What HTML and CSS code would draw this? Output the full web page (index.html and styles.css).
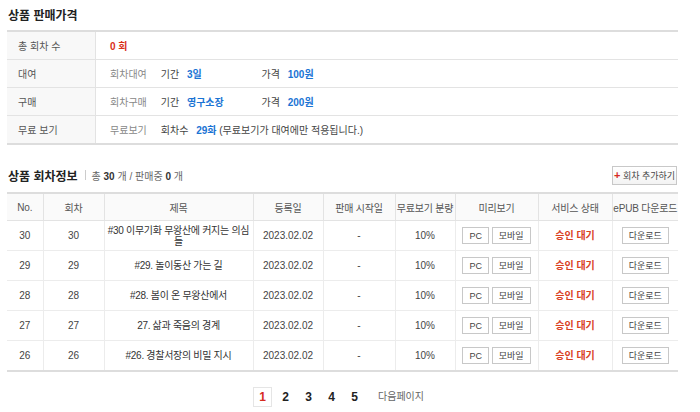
FILE: index.html
```html
<!DOCTYPE html>
<html lang="ko">
  <head>
    <meta charset="UTF-8" />
    <title>상품 판매가격</title>
    <link rel="stylesheet" href="styles.css">
  </head>
  <body>
    <div class="container">
      <h2 class="section-title">상품 판매가격</h2>

      <table class="price-table">
        <tr>
          <th>총 회차 수</th>
          <td><span class="red">0 회</span></td>
        </tr>
        <tr>
          <th>대여</th>
          <td>
            <span class="kind">회차대여</span>
            <span class="period">기간 <b class="blue">3일</b></span>
            <span>가격 <b class="blue">100원</b></span>
          </td>
        </tr>
        <tr>
          <th>구매</th>
          <td>
            <span class="kind">회차구매</span>
            <span class="period">기간 <b class="blue">영구소장</b></span>
            <span>가격 <b class="blue">200원</b></span>
          </td>
        </tr>
        <tr>
          <th>무료 보기</th>
          <td>
            <span class="kind">무료보기</span>
            <span>회차수 <b class="blue">29화</b> (무료보기가 대여에만 적용됩니다.)</span>
          </td>
        </tr>
      </table>

      <div class="list-head">
        <h2 class="section-title">상품 회차정보</h2>
        <span class="bar"></span>
        <span class="count">총 <b>30</b> 개 / 판매중 <b>0</b> 개</span>
        <button class="add-btn"><span class="plus">+</span> 회차 추가하기</button>
      </div>

      <table class="episode-table">
        <colgroup>
          <col style="width:36px" />
          <col style="width:61px" />
          <col style="width:149px" />
          <col style="width:70px" />
          <col style="width:72px" />
          <col style="width:60px" />
          <col style="width:83px" />
          <col style="width:74px" />
          <col style="width:66px" />
        </colgroup>
        <thead>
          <tr>
            <th>No.</th>
            <th>회차</th>
            <th>제목</th>
            <th>등록일</th>
            <th>판매 시작일</th>
            <th>무료보기 분량</th>
            <th>미리보기</th>
            <th>서비스 상태</th>
            <th>ePUB 다운로드</th>
          </tr>
        </thead>
        <tbody>
          <tr>
            <td>30</td><td>30</td>
            <td class="title">#30 이무기화 무왕산에 커지는 의심들</td>
            <td>2023.02.02</td><td>-</td><td>10%</td>
            <td><button class="sm">PC</button> <button class="sm">모바일</button></td>
            <td class="state">승인 대기</td>
            <td><button class="sm">다운로드</button></td>
          </tr>
          <tr>
            <td>29</td><td>29</td>
            <td class="title">#29. 놀이동산 가는 길</td>
            <td>2023.02.02</td><td>-</td><td>10%</td>
            <td><button class="sm">PC</button> <button class="sm">모바일</button></td>
            <td class="state">승인 대기</td>
            <td><button class="sm">다운로드</button></td>
          </tr>
          <tr>
            <td>28</td><td>28</td>
            <td class="title">#28. 봄이 온 무왕산에서</td>
            <td>2023.02.02</td><td>-</td><td>10%</td>
            <td><button class="sm">PC</button> <button class="sm">모바일</button></td>
            <td class="state">승인 대기</td>
            <td><button class="sm">다운로드</button></td>
          </tr>
          <tr>
            <td>27</td><td>27</td>
            <td class="title">27. 삶과 죽음의 경계</td>
            <td>2023.02.02</td><td>-</td><td>10%</td>
            <td><button class="sm">PC</button> <button class="sm">모바일</button></td>
            <td class="state">승인 대기</td>
            <td><button class="sm">다운로드</button></td>
          </tr>
          <tr>
            <td>26</td><td>26</td>
            <td class="title">#26. 경찰서장의 비밀 지시</td>
            <td>2023.02.02</td><td>-</td><td>10%</td>
            <td><button class="sm">PC</button> <button class="sm">모바일</button></td>
            <td class="state">승인 대기</td>
            <td><button class="sm">다운로드</button></td>
          </tr>
        </tbody>
      </table>

      <div class="paging">
        <a class="on">1</a>
        <a>2</a>
        <a>3</a>
        <a>4</a>
        <a>5</a>
        <a class="next">다음페이지</a>
      </div>
    </div>
  </body>
</html>
```

FILE: styles.css
```css
body {
  margin: 0;
  padding: 0;
  background-color: #fff;
  font-family: "Liberation Sans", "Noto Sans CJK KR", sans-serif;
  font-size: 10px;
  color: #333;
}

.container {
  width: 671px;
  padding: 0 7px;
}

.section-title {
  margin: 0;
  padding: 6px 0 0 1px;
  height: 24px;
  font-size: 12px;
  font-weight: bold;
  color: #222;
}

/* price table */
.price-table {
  width: 100%;
  border-collapse: collapse;
  border-top: 2px solid #ddd;
}

.price-table th,
.price-table td {
  height: 27px;
  padding: 0;
  border-bottom: 1px solid #e3e3e3;
  text-align: left;
  font-weight: normal;
}

.price-table th {
  width: 77px;
  padding-left: 11px;
  background-color: #f8f8f8;
  border-right: 1px solid #e3e3e3;
  color: #555;
}

.price-table td {
  padding-left: 14px;
  color: #444;
}

.price-table tr:last-child th,
.price-table tr:last-child td {
  border-bottom: 2px solid #ddd;
}

.kind {
  display: inline-block;
  width: 48px;
  color: #888;
}

.period {
  display: inline-block;
  width: 98px;
}

.price-table b {
  margin-left: 5px;
  font-weight: 600;
}

.red {
  color: #d9301a;
  font-weight: bold;
}

.blue {
  color: #1b74d4;
}

/* episode list */
.list-head {
  display: flex;
  align-items: center;
  margin-top: 16px;
  margin-bottom: 3px;
  height: 28px;
}

.list-head .section-title {
  padding: 0 0 0 1px;
  height: auto;
}

.bar {
  width: 1px;
  height: 10px;
  margin: 0 6px 0 7px;
  background-color: #ccc;
}

.count {
  color: #666;
}

.count b {
  color: #333;
}

.add-btn {
  margin-left: auto;
  margin-right: 1px;
  height: 19px;
  width: 65px;
  padding: 0;
  border: 1px solid #c8c8c8;
  background: linear-gradient(#fff, #f3f3f3);
  font-family: inherit;
  font-size: 9px;
  color: #444;
  white-space: nowrap;
}

.plus {
  color: #d62b1f;
  font-weight: bold;
  font-size: 11px;
}

.episode-table {
  width: 100%;
  border-collapse: collapse;
  table-layout: fixed;
  border-top: 2px solid #ddd;
  border-bottom: 2px solid #ddd;
}

.episode-table th {
  height: 26px;
  padding: 0;
  background-color: #fafafa;
  font-weight: normal;
  color: #555;
  white-space: nowrap;
  letter-spacing: -0.2px;
  border-bottom: 1px solid #e3e3e3;
  border-left: 1px solid #e3e3e3;
}

.episode-table td {
  height: 29px;
  padding: 0 1px;
  text-align: center;
  color: #444;
  border-bottom: 1px solid #ececec;
  border-left: 1px solid #ececec;
  line-height: 11px;
}

.episode-table th:first-child,
.episode-table td:first-child {
  border-left: none;
}

.episode-table td.title {
  color: #333;
  letter-spacing: -0.3px;
}

.episode-table td.state {
  color: #d9401f;
  font-weight: 600;
}

.sm {
  height: 17px;
  padding: 0 6px;
  border: 1px solid #c8c8c8;
  background-color: #fff;
  font-family: inherit;
  font-size: 9px;
  color: #444;
}

/* paging */
.paging {
  display: flex;
  justify-content: center;
  align-items: center;
  margin-top: 15px;
  padding-right: 8px;
}

.paging a {
  display: inline-block;
  min-width: 19px;
  height: 20px;
  line-height: 20px;
  margin: 0 2px;
  text-align: center;
  font-size: 12px;
  font-weight: bold;
  color: #222;
}

.paging a.on {
  border: 1px solid #e5e5e5;
  color: #d62b1f;
  height: 18px;
  line-height: 18px;
  min-width: 17px;
}

.paging a.next {
  margin-left: 12px;
  font-size: 10px;
  font-weight: normal;
  color: #666;
}
```
